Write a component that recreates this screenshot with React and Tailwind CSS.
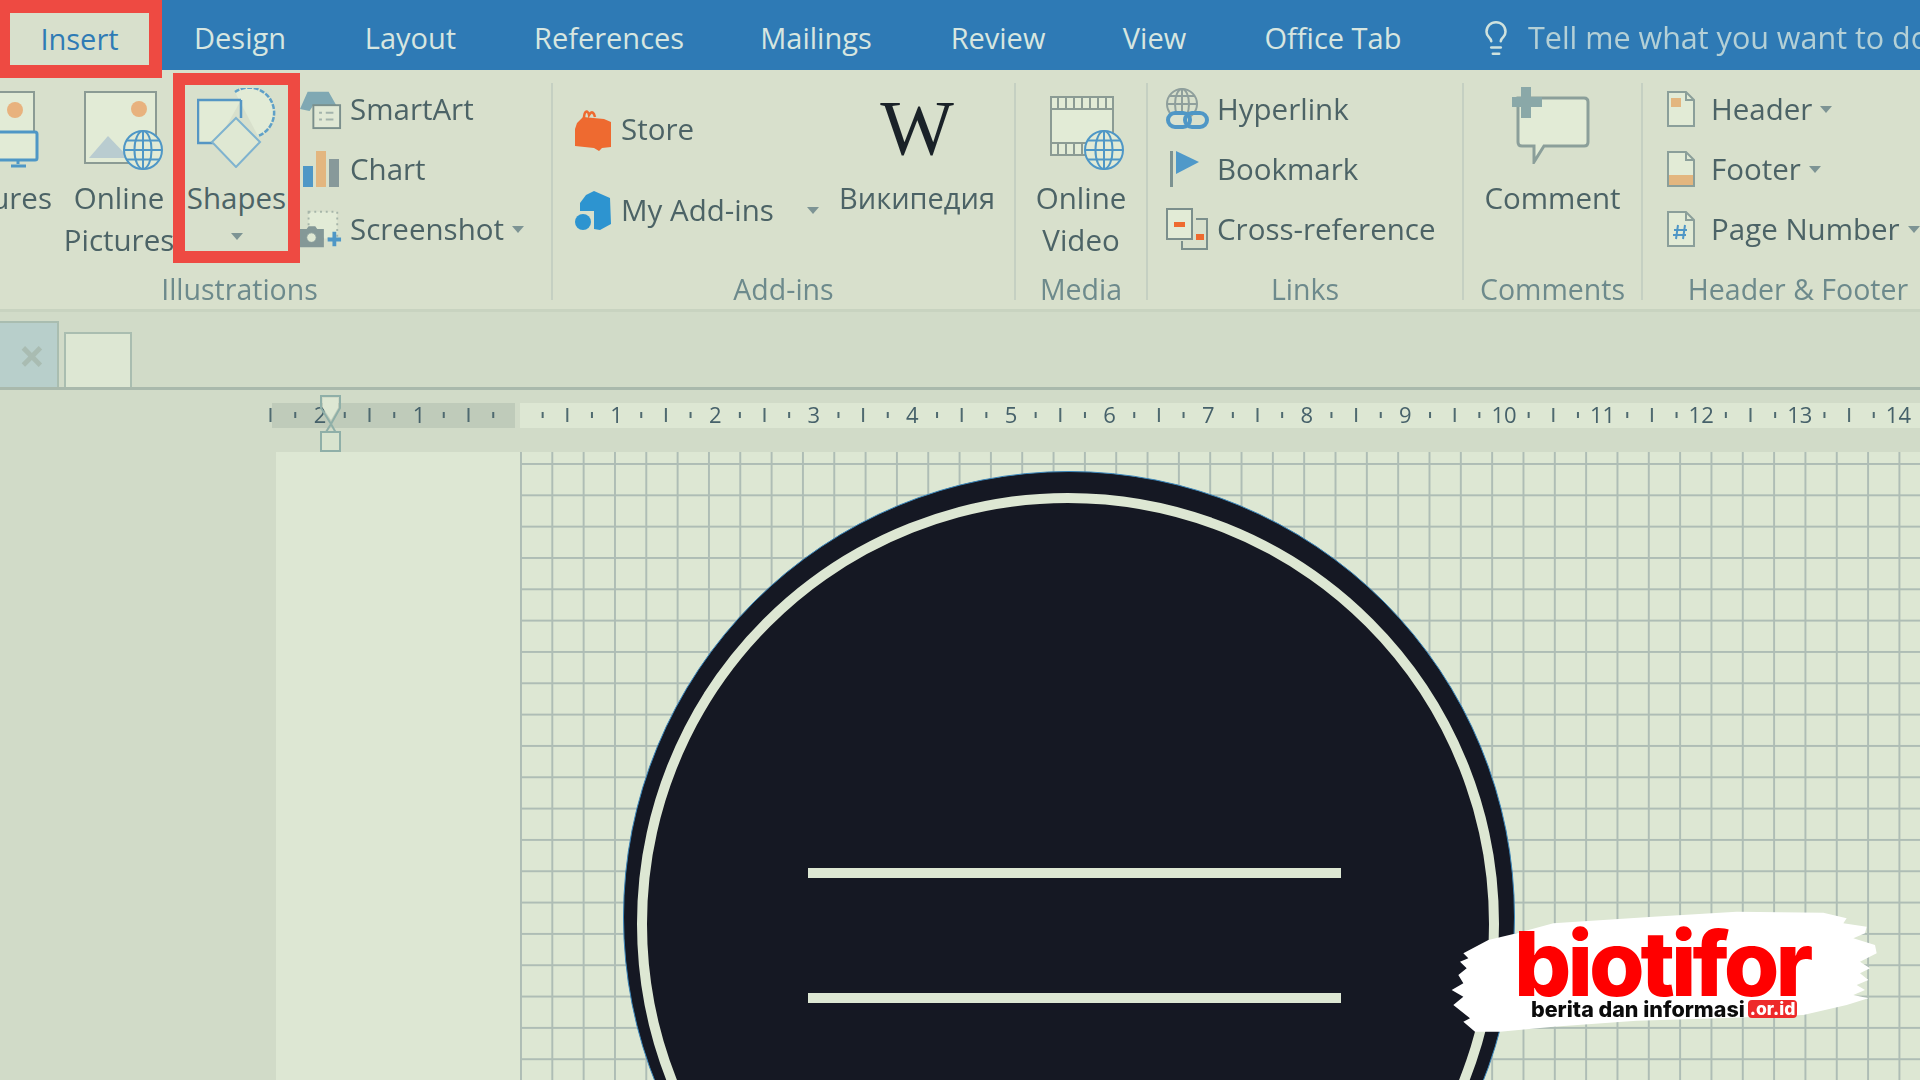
import { Lightbulb } from "lucide-react";

const tabs = [
  { label: "Design", width: "w-[94px]" },
  { label: "Layout", width: "w-[95px]" },
  { label: "References", width: "w-[148px]" },
  { label: "Mailings", width: "w-[116px]" },
  { label: "Review", width: "w-[96px]" },
  { label: "View", width: "w-[65px]" },
  { label: "Office Tab", width: "w-[140px]" },
];

const Arrow = ({ className = "" }) => (
  <span className={`inline-block border-x-[6px] border-t-[7px] border-x-transparent border-t-[#7d9494] ${className}`} />
);

const Separator = () => <div className="mt-[13px] h-[217px] w-[2px] shrink-0 bg-[#c5d0c2]" />;

const Globe = ({ cx, cy, r }) => (
  <g fill="#e2ebd6" stroke="#4f97c6" strokeWidth="2">
    <circle cx={cx} cy={cy} r={r} />
    <ellipse cx={cx} cy={cy} rx={r * 0.45} ry={r} fill="none" />
    <path d={`M${cx} ${cy - r}V${cy + r}M${cx - r} ${cy}H${cx + r}M${cx - r * 0.85} ${cy - r * 0.5}H${cx + r * 0.85}M${cx - r * 0.85} ${cy + r * 0.5}H${cx + r * 0.85}`} fill="none" />
  </g>
);

const Group = ({ width, label, labelClass = "", children }) => (
  <div className={`flex h-full shrink-0 flex-col ${width}`}>
    <div className="flex h-[200px]">{children}</div>
    <div className={`text-center text-[28.5px] leading-[40px] text-[#6d8a8c] ${labelClass}`}>{label}</div>
  </div>
);

const Row = ({ icon, label, arrow, iconWidth = "w-[50px]", arrowClass = "ml-[8px]" }) => (
  <div className="flex h-[60px] items-center whitespace-nowrap">
    <div className={`flex shrink-0 justify-center ${iconWidth}`}>{icon}</div>
    <span>{label}</span>
    {arrow && <Arrow className={arrowClass} />}
  </div>
);

const Tall = ({ icon, lines, width, iconClass = "" }) => (
  <div className={`flex shrink-0 flex-col items-center whitespace-nowrap pt-[20px] leading-[42px] ${width}`}>
    <div className={`flex h-[87px] items-start justify-center ${iconClass}`}>{icon}</div>
    {lines.map((line) => (
      <div key={line}>{line}</div>
    ))}
  </div>
);

const PicturesIcon = () => (
  <svg width="65" height="80" viewBox="0 0 65 80">
    <rect x="-10" y="2" width="44" height="44" fill="#e2ebd6" stroke="#8b9b94" strokeWidth="2" />
    <circle cx="15" cy="20" r="8" fill="#e8b27e" />
    <rect x="-8" y="42" width="45" height="28" rx="2" fill="#e2ebd6" stroke="#4f97c6" strokeWidth="3" />
    <path d="M18 70v4M11 76h15" stroke="#4f97c6" strokeWidth="3" />
  </svg>
);

const OnlinePicturesIcon = () => (
  <svg width="84" height="82" viewBox="0 0 84 82">
    <rect x="2" y="2" width="71" height="71" fill="#e2ebd6" stroke="#8b9b94" strokeWidth="2" />
    <circle cx="56" cy="19" r="8" fill="#e8b27e" />
    <path d="M6 68L25 46L46 68Z" fill="#b9ccd0" />
    <Globe cx={60} cy={60} r={19} />
  </svg>
);

const ShapesIcon = () => (
  <svg width="80" height="80" viewBox="0 0 80 80">
    <path d="M38 4A25 25 0 1 1 61 48" fill="#e2ebd6" stroke="#5fa0c8" strokeWidth="2.5" strokeDasharray="5 1.5" />
    <path d="M44 12H1V55H20" fill="#e2ebd6" stroke="#5596c4" strokeWidth="2.5" />
    <path d="M44 12V30" stroke="#5596c4" strokeWidth="2.5" />
    <path d="M39 30L63 54L39 79L15 54Z" fill="#dfe8d3" stroke="#7fb3cf" strokeWidth="2" />
  </svg>
);

const SmartArtIcon = () => (
  <svg width="44" height="44" viewBox="0 0 44 44">
    <path d="M0 22L8 4H30L38 18H14L10 24Z" fill="#7fa8b3" />
    <rect x="14" y="18" width="28" height="24" fill="#e0e8d5" stroke="#7b8f8c" strokeWidth="2" />
    <path d="M20 26h3M27 26h8M20 33h3M27 33h8" stroke="#a3b3ac" strokeWidth="2" />
  </svg>
);

const ChartIcon = () => (
  <svg width="40" height="38" viewBox="0 0 40 38">
    <rect x="2" y="16" width="10" height="21" fill="#4f97c6" />
    <rect x="15" y="1" width="10" height="36" fill="#e3b67f" />
    <rect x="28" y="9" width="10" height="28" fill="#87999a" />
  </svg>
);

const ScreenshotIcon = () => (
  <svg width="44" height="40" viewBox="0 0 44 40">
    <rect x="9" y="2" width="30" height="28" fill="#e2ebd6" stroke="#a6b5a9" strokeWidth="2" strokeDasharray="2 4" />
    <path d="M0 20H7L9 17H16L18 20H25V39H0Z" fill="#849897" />
    <circle cx="12" cy="29" r="5" fill="#dfe8d3" stroke="#849897" />
    <path d="M36 23V38M29 31H43" stroke="#4f97c6" strokeWidth="4" />
  </svg>
);

const StoreIcon = () => (
  <svg width="38" height="42" viewBox="0 0 38 42">
    <path d="M10 10C10 1 14 1 15 6C18 1 20 4 21 8" fill="none" stroke="#ee6a30" strokeWidth="2.5" />
    <path d="M3 14L9 8L30 10L37 13V38L28 39L25 42L20 39L1 37V20Z" fill="#ee6a30" />
  </svg>
);

const AddinsIcon = () => (
  <svg width="38" height="40" viewBox="0 0 38 40">
    <path d="M20 0L36 7L37 33L26 39L20 38V20H6V12L12 4Z" fill="#2d94d0" />
    <circle cx="9" cy="31" r="8" fill="#2d94d0" />
  </svg>
);

const VideoIcon = () => (
  <svg width="78" height="76" viewBox="0 0 78 76">
    <rect x="3" y="2" width="62" height="58" fill="#e2ebd6" stroke="#8b9b94" strokeWidth="2" />
    <path d="M3 14H65M3 48H46" stroke="#8b9b94" strokeWidth="2" />
    <path d="M10 2V14M18 2V14M26 2V14M34 2V14M42 2V14M50 2V14M58 2V14M10 48V60M18 48V60M26 48V60M34 48V60" stroke="#8b9b94" strokeWidth="2" />
    <Globe cx={56} cy={55} r={19} />
  </svg>
);

const HyperlinkIcon = () => (
  <svg width="44" height="44" viewBox="0 0 44 44">
    <g fill="none" stroke="#8f9f9c" strokeWidth="2">
      <circle cx="17" cy="17" r="15" />
      <ellipse cx="17" cy="17" rx="7" ry="15" />
      <path d="M2 17H32M5 9H29M17 2V30" />
    </g>
    <rect x="3" y="26" width="22" height="14" rx="7" fill="#dbe3d0" stroke="#4f97c6" strokeWidth="4" />
    <rect x="20" y="26" width="22" height="14" rx="7" fill="none" stroke="#4f97c6" strokeWidth="4" />
  </svg>
);

const BookmarkIcon = () => (
  <svg width="36" height="38" viewBox="0 0 36 38">
    <rect x="5" y="1" width="3" height="36" fill="#7c9291" />
    <path d="M11 1L34 12L11 24Z" fill="#4f99c9" />
  </svg>
);

const CrossRefIcon = () => (
  <svg width="44" height="44" viewBox="0 0 44 44">
    <rect x="2" y="2" width="25" height="30" fill="#e2ebd6" stroke="#7b8f8c" strokeWidth="2" />
    <path d="M31 12H42V42H17V34" fill="none" stroke="#7b8f8c" strokeWidth="2" />
    <rect x="9" y="15" width="11" height="5" fill="#ee6a30" />
    <rect x="31" y="27" width="8" height="6" fill="#ee6a30" />
  </svg>
);

const CommentIcon = () => (
  <svg width="80" height="78" viewBox="0 0 80 78">
    <path d="M8 12H74Q78 12 78 16V56Q78 60 74 60H34L24 76V60H12Q8 60 8 56Z" fill="#e2ebd6" stroke="#8b9f9a" strokeWidth="3" />
    <path d="M16 1V32M2 16H32" stroke="#8aa8a8" strokeWidth="10" />
  </svg>
);

const PageIcon = ({ children }) => (
  <svg width="30" height="38" viewBox="0 0 30 38">
    <path d="M2 2H20L28 10V36H2Z" fill="#e2ebd6" stroke="#8b9f9a" strokeWidth="2" />
    <path d="M20 2V10H28" fill="none" stroke="#8b9f9a" strokeWidth="2" />
    {children}
  </svg>
);

function Ruler() {
  const pitch = 98.6;
  const left = [];
  for (let q = 1; q <= 10; q++) left.push(518 - q * 24.75);
  const right = [];
  for (let q = 1; q <= 58; q++) right.push(518 + (q * pitch) / 4);
  const mark = (x, q) => {
    if (q % 4 === 0) {
      return (
        <text key={x} x={x} y="33" textAnchor="middle" fontSize="22" fill="#46616a" fontFamily="Open Sans, sans-serif">
          {q / 4}
        </text>
      );
    }
    const h = q % 2 === 0 ? 7 : 3;
    return <rect key={x} x={x - 1} y={25 - h} width="2" height={h * 2} fill="#4f6a70" />;
  };
  return (
    <svg className="absolute left-0 top-0" width="1920" height="62" viewBox="0 0 1920 62">
      {left.map((x, i) => mark(x, i + 1))}
      {right.map((x, i) => mark(x, i + 1))}
      <path d="M321 6H340V18L331 34L340 50V61H321V50L331 34L321 18Z" fill="none" stroke="#8fafa8" strokeWidth="2" />
      <path d="M323 8H338V18L331 30L323 18Z" fill="#dde7d3" />
      <path d="M321 42H340V61H321Z" fill="#d8e3ce" stroke="#8fafa8" strokeWidth="2" />
    </svg>
  );
}

function Logo() {
  return (
    <div className="absolute left-[1420px] top-[890px] h-[190px] w-[500px]">
      <svg className="absolute inset-0" width="500" height="190" viewBox="0 0 1500 570">
        <path
          fill="#ffffff"
          d="M205 150L290 130L400 100L700 80L950 65L1210 68L1280 85L1270 100L1340 110L1335 130L1300 145L1365 165L1370 190L1320 215L1350 235L1320 250L1345 270L1310 285L1335 300L1300 315L1345 325L1280 345L1150 375L900 385L650 392L400 410L240 425L165 425L130 395L150 385L100 345L130 320L95 300L130 280L115 255L140 235L120 215L145 205L130 190Z"
        />
      </svg>
      <div className="absolute left-[94px] top-[42px] font-['Inter',sans-serif] text-[90px] font-extrabold leading-[64px] tracking-[-4px] text-[#ff0000]">
        biotifor
      </div>
      <div className="absolute left-[111px] top-[108px] flex items-center gap-[3px] whitespace-nowrap font-['Inter',sans-serif] text-[21.5px] font-extrabold leading-[22px] text-[#0b0b0b]">
        <span>berita dan informasi</span>
        <span className="rounded-[4px] bg-[#ee2a2a] px-[2px] text-[17.5px] leading-[18px] text-white">.or.id</span>
      </div>
    </div>
  );
}

export default function App() {
  return (
    <div className="relative h-[1080px] w-[1920px] overflow-hidden bg-[#d1dbc8] font-['Open_Sans',sans-serif] text-[29.5px] text-[#4c6366]">
      <div className="flex h-full flex-col blur-[0.7px]">
        <header className="relative z-10 flex h-[70px] shrink-0 items-start bg-[#2e7ab5] text-[29px] text-[#d7e6e0]">
          <div className="flex h-[78px] w-[162px] shrink-0 items-center justify-center border-y-[13px] border-l-[10px] border-r-[13px] border-[#ee4a42] bg-[#d8e0cc] text-[#2f7bb5]">
            Insert
          </div>
          <nav className="ml-[31px] flex h-[75px] items-center gap-[76px] whitespace-nowrap">
            {tabs.map((tab) => (
              <span key={tab.label} className={`text-center ${tab.width}`}>
                {tab.label}
              </span>
            ))}
          </nav>
          <div className="ml-[74px] flex h-[75px] items-center gap-[13px] whitespace-nowrap text-[30.5px] text-[#b4d0d6]">
            <Lightbulb size={38} strokeWidth={1.6} className="text-[#cfe2de]" />
            <span>Tell me what you want to do</span>
          </div>
        </header>

        <section className="flex h-[242px] shrink-0 border-b-[3px] border-[#c8d3c0] bg-[#d8e0cc]">
          <Group width="w-[551px]" label="Illustrations" labelClass="pr-[72px]">
            <div className="flex w-[65px] shrink-0 flex-col items-end whitespace-nowrap pr-[13px] pt-[20px] leading-[42px]">
              <div className="-mr-[13px] h-[87px]">
                <PicturesIcon />
              </div>
              <div>Pictures</div>
            </div>
            <Tall width="w-[108px]" icon={<OnlinePicturesIcon />} iconClass="pl-[12px]" lines={["Online", "Pictures"]} />
            <div className="relative z-10 mt-[3px] flex h-[190px] w-[127px] shrink-0 flex-col items-center border-[12px] border-[#ee4a42] bg-[#d8e0cc]">
              <div className="h-[92px] pt-[3px]">
                <ShapesIcon />
              </div>
              <div className="leading-[42px]">Shapes</div>
              <Arrow className="mt-[14px]" />
            </div>
            <div className="pt-[9px]">
              <Row icon={<SmartArtIcon />} iconWidth="w-[50px] pr-[8px]" label="SmartArt" />
              <Row icon={<ChartIcon />} iconWidth="w-[50px] pr-[8px]" label="Chart" />
              <Row icon={<ScreenshotIcon />} iconWidth="w-[50px] pr-[8px]" label="Screenshot" arrow />
            </div>
          </Group>
          <Separator />
          <Group width="w-[461px]" label="Add-ins">
            <div className="w-[287px] shrink-0 pl-[21px] pt-[19px]">
              <div className="flex h-[81px] items-center gap-[9px] whitespace-nowrap">
                <StoreIcon />
                <span>Store</span>
              </div>
              <div className="flex h-[81px] items-center gap-[9px] whitespace-nowrap">
                <AddinsIcon />
                <span>My Add-ins</span>
                <Arrow className="ml-[24px]" />
              </div>
            </div>
            <div className="flex w-[154px] shrink-0 flex-col items-center whitespace-nowrap pt-[20px] leading-[42px]">
              <div className="flex h-[87px] items-start justify-center font-['Liberation_Serif',serif] text-[78px] leading-[76px] text-[#1a2228]">W</div>
              <div className="text-[29px]">Википедия</div>
            </div>
          </Group>
          <Separator />
          <Group width="w-[130px]" label="Media">
            <Tall width="w-[130px]" icon={<VideoIcon />} iconClass="pl-[12px] pt-[5px]" lines={["Online", "Video"]} />
          </Group>
          <Separator />
          <Group width="w-[314px]" label="Links">
            <div className="pl-[17px] pt-[9px]">
              <Row icon={<HyperlinkIcon />} label="Hyperlink" iconWidth="w-[52px] !justify-start" />
              <Row icon={<BookmarkIcon />} label="Bookmark" iconWidth="w-[52px] !justify-start" />
              <Row icon={<CrossRefIcon />} label="Cross-reference" iconWidth="w-[52px] !justify-start" />
            </div>
          </Group>
          <Separator />
          <Group width="w-[177px]" label="Comments">
            <Tall width="w-[177px]" icon={<CommentIcon />} iconClass="pr-[6px] -mt-[4px] !h-[91px]" lines={["Comment"]} />
          </Group>
          <Separator />
          <Group width="w-[310px]" label="Header & Footer">
            <div className="pl-[23px] pt-[9px]">
              <Row
                iconWidth="w-[45px] !justify-start"
                label="Header"
                arrow
                icon={
                  <PageIcon>
                    <rect x="5" y="8" width="10" height="9" fill="#e3b67f" />
                  </PageIcon>
                }
              />
              <Row
                iconWidth="w-[45px] !justify-start"
                label="Footer"
                arrow
                icon={
                  <PageIcon>
                    <rect x="3" y="25" width="24" height="10" fill="#e3b67f" />
                  </PageIcon>
                }
              />
              <Row
                iconWidth="w-[45px] !justify-start"
                label="Page Number"
                arrow
                icon={
                  <PageIcon>
                    <path d="M12 15L10 29M19 15L17 29M8 20H21M7 25H20" stroke="#4f97c6" strokeWidth="2" />
                  </PageIcon>
                }
              />
            </div>
          </Group>
        </section>

        <div className="flex h-[78px] shrink-0 items-end gap-[5px] border-b-[3px] border-[#a9b9ac]">
          <div className="flex h-[66px] w-[59px] items-center justify-end border-r-2 border-t-2 border-[#a9bdb0] bg-[#b8cfcb] pr-[12px] text-[#a9bcb2]">
            <span className="text-[46px] font-bold leading-none">×</span>
          </div>
          <div className="h-[55px] w-[68px] border-x-2 border-t-2 border-[#a9bdb0] bg-[#dde7d3]" />
        </div>

        <div className="relative h-[62px] shrink-0">
          <div className="flex gap-[5px] pl-[272px] pt-[13px]">
            <div className="h-[25px] w-[243px] bg-[#bfcbba]" />
            <div className="h-[25px] flex-1 bg-[#dde7d3]" />
          </div>
          <Ruler />
        </div>

        <main className="flex flex-1 pl-[276px]">
          <div className="w-[244px] bg-[#dde7d3]" />
          <div className="relative flex-1 bg-[#dde7d3] bg-[linear-gradient(to_right,#aebdb5_2px,transparent_2px),linear-gradient(to_bottom,#aebdb5_2px,transparent_2px)] bg-[size:31.33px_31.33px] bg-[position:0_0,0_11px]">
            <div className="absolute left-[103px] top-[19px] h-[892px] w-[892px] rounded-full border border-[#3a86bb] bg-[#151823]">
              <div className="absolute left-[13px] top-[21px] h-[862px] w-[862px] rounded-full border-[10px] border-[#dde7d3]" />
              <div className="absolute left-[184px] top-[396px] h-[10px] w-[533px] bg-[#dde7d3]" />
              <div className="absolute left-[184px] top-[521px] h-[10px] w-[533px] bg-[#dde7d3]" />
            </div>
          </div>
        </main>
      </div>
      <Logo />
    </div>
  );
}
